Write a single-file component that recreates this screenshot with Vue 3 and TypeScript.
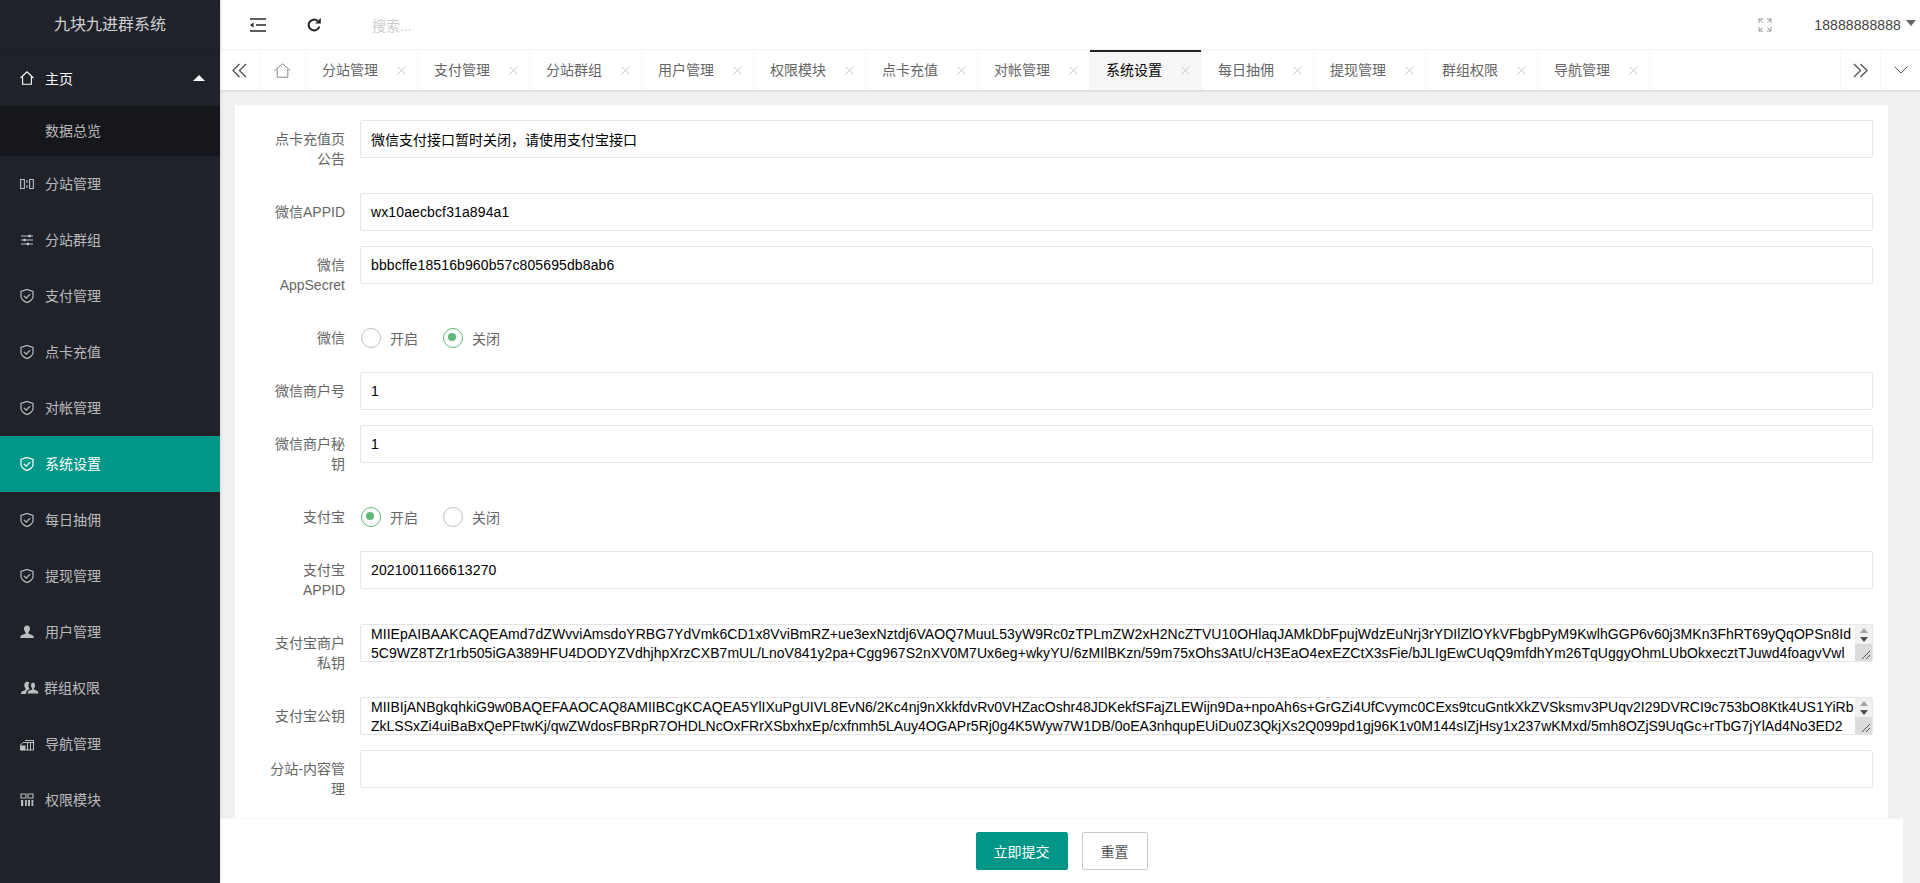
<script setup lang="ts">
interface NavItem { label: string; icon: string; active?: boolean }
const navItems: NavItem[] = [
  { label: '分站管理', icon: 'split' },
  { label: '分站群组', icon: 'sliders' },
  { label: '支付管理', icon: 'shield' },
  { label: '点卡充值', icon: 'shield' },
  { label: '对帐管理', icon: 'shield' },
  { label: '系统设置', icon: 'shield', active: true },
  { label: '每日抽佣', icon: 'shield' },
  { label: '提现管理', icon: 'shield' },
  { label: '用户管理', icon: 'user' },
  { label: '群组权限', icon: 'users' },
  { label: '导航管理', icon: 'chart' },
  { label: '权限模块', icon: 'grid' },
]
const tabs = ['分站管理', '支付管理', '分站群组', '用户管理', '权限模块', '点卡充值', '对帐管理', '系统设置', '每日抽佣', '提现管理', '群组权限', '导航管理']

type Row =
  | { kind: 'input'; label: string; value: string; tall?: boolean }
  | { kind: 'radio'; label: string; on: boolean }
  | { kind: 'area'; label: string; value: string; tall?: boolean }

const rows: Row[] = [
  { kind: 'input', label: '点卡充值页公告', value: '微信支付接口暂时关闭，请使用支付宝接口', tall: true },
  { kind: 'input', label: '微信APPID', value: 'wx10aecbcf31a894a1' },
  { kind: 'input', label: '微信AppSecret', value: 'bbbcffe18516b960b57c805695db8ab6', tall: true },
  { kind: 'radio', label: '微信', on: false },
  { kind: 'input', label: '微信商户号', value: '1' },
  { kind: 'input', label: '微信商户秘钥', value: '1', tall: true },
  { kind: 'radio', label: '支付宝', on: true },
  { kind: 'input', label: '支付宝APPID', value: '2021001166613270', tall: true },
  {
    kind: 'area',
    label: '支付宝商户私钥',
    tall: true,
    value:
      'MIIEpAIBAAKCAQEAmd7dZWvviAmsdoYRBG7YdVmk6CD1x8VviBmRZ+ue3exNztdj6VAOQ7MuuL53yW9Rc0zTPLmZW2xH2NcZTVU10OHlaqJAMkDbFpujWdzEuNrj3rYDIlZlOYkVFbgbPyM9KwlhGGP6v60j3MKn3FhRT69yQqOPSn8Id\n5C9WZ8TZr1rb505iGA389HFU4DODYZVdhjhpXrzCXB7mUL/LnoV841y2pa+Cgg967S2nXV0M7Ux6eg+wkyYU/6zMIlBKzn/59m75xOhs3AtU/cH3EaO4exEZCtX3sFie/bJLIgEwCUqQ9mfdhYm26TqUggyOhmLUbOkxecztTJuwd4foagvVwl',
  },
  {
    kind: 'area',
    label: '支付宝公钥',
    value:
      'MIIBIjANBgkqhkiG9w0BAQEFAAOCAQ8AMIIBCgKCAQEA5YlIXuPgUIVL8EvN6/2Kc4nj9nXkkfdvRv0VHZacOshr48JDKekfSFajZLEWijn9Da+npoAh6s+GrGZi4UfCvymc0CExs9tcuGntkXkZVSksmv3PUqv2I29DVRCI9c753bO8Ktk4US1YiRb\nZkLSSxZi4uiBaBxQePFtwKj/qwZWdosFBRpR7OHDLNcOxFRrXSbxhxEp/cxfnmh5LAuy4OGAPr5Rj0g4K5Wyw7W1DB/0oEA3nhqupEUiDu0Z3QkjXs2Q099pd1gj96K1v0M144sIZjHsy1x237wKMxd/5mh8OZjS9UqGc+rTbG7jYlAd4No3ED2',
  },
  { kind: 'input', label: '分站-内容管理', value: '', tall: true },
]
const isLatin = (s: string) => /^[\x00-\x7f]*$/.test(s)
</script>

<template>
  <div class="app">
    <aside class="side">
      <div class="logo">九块九进群系统</div>
      <div class="nav-item open">
        <svg class="ico" viewBox="0 0 14 14"><path d="M.6 7 7 .8 13.4 7M2.6 5.6v7.600h8.800V5.600" fill="none" stroke="currentColor" stroke-width="1.100" /></svg>
        <span>主页</span>
        <i class="nav-caret"></i>
      </div>
      <div class="sub">数据总览</div>
      <div v-for="n in navItems" :key="n.label" class="nav-item" :class="{ active: n.active }">
        <svg v-if="n.icon === 'split'" class="ico" viewBox="0 0 14 14">
          <path d="M.6 2.500h3.800v9H.6zM9.600 2.500h3.800v9H9.600z" fill="none" stroke="currentColor" stroke-width="1.100" />
          <path d="M6.200 3.500h1.500v2H6.200zM6.200 8.500h1.500v2H6.200z" fill="currentColor" />
        </svg>
        <svg v-else-if="n.icon === 'sliders'" class="ico" viewBox="0 0 14 14">
          <path d="M1 3h12M1 7h12M1 11h12" stroke="currentColor" stroke-width="1.200" />
          <path d="M8.500 1.800h2v2.400h-2zM3.500 5.800h2v2.400h-2zM6.800 9.800h2v2.400h-2z" fill="currentColor" />
        </svg>
        <svg v-else-if="n.icon === 'shield'" class="ico" viewBox="0 0 14 14">
          <path d="M7 .4 1 2.400v4.800c0 3 2.600 5 6 6.400 3.400-1.400 6-3.400 6-6.400V2.400z" fill="none" stroke="currentColor" stroke-width="1.200" />
          <path d="m3.900 6.900 2.300 2.200 3.900-3.900" fill="none" stroke="currentColor" stroke-width="1.200" />
        </svg>
        <svg v-else-if="n.icon === 'user'" class="ico" viewBox="0 0 14 14">
          <path d="M7 .4c1.900 0 3 1.400 3 3.200 0 1.500-.7 3-1.500 3.700v1.400c1.500.7 4.600 1.300 5.100 2.800.2.600.2 1.500.2 1.500H.2s0-.9.2-1.500c.5-1.500 3.600-2.100 5.100-2.800V7.300C4.700 6.600 4 5.100 4 3.600 4 1.800 5.100.4 7 .4z" fill="currentColor" />
        </svg>
        <svg v-else-if="n.icon === 'users'" class="ico wide" viewBox="0 0 18 14">
          <path d="M11.600 1.600c1.600 0 2.500 1.200 2.500 2.700 0 1.200-.5 2.500-1.200 3v1.300c1.300.6 3.800 1.100 4.300 2.400.2.500.2 1.500.2 1.500H6.700s0-1 .2-1.500c.4-1.300 3-1.800 4.300-2.400V7.300c-.7-.5-1.200-1.800-1.200-3 0-1.500.9-2.700 2.500-2.700z" fill="currentColor" />
          <path d="M6.200.8c1 0 1.800.5 2.200 1.300-.7.600-1 1.400-1 2.400 0 1.300.5 2.400 1.200 3.200v.6c-1.500.7-3.300 1.300-3.500 3.500v1.200H0s0-1 .2-1.500c.4-1.400 3-1.900 4.300-2.500V7.300C3.800 6.700 3.300 5.300 3.300 4 3.300 2.100 4.400.8 6.200.8z" fill="currentColor" />
        </svg>
        <svg v-else-if="n.icon === 'chart'" class="ico" viewBox="0 0 14 14">
          <path d="M.5 8 3 5.500h10.500V13H.5z" fill="none" stroke="currentColor" stroke-width="1" />
          <path d="M1 8.500h4.500V13H1z" fill="currentColor" />
          <path d="M7.500 5.500V13M10.500 5.500V13M5 3.500h8.500V6" fill="none" stroke="currentColor" stroke-width="1" />
        </svg>
        <svg v-else class="ico" viewBox="0 0 14 14">
          <path d="M1 1h5v4H1zM8 1h5v4H8z" fill="none" stroke="currentColor" stroke-width="1.100" />
          <path d="M1 7h2.200v6H1zM5 7h1.800v6H5zM8 7h2v6H8zM11.500 7h1.800v6h-1.800z" fill="currentColor" />
        </svg>
        <span>{{ n.label }}</span>
      </div>
    </aside>

    <div class="main">
      <header class="top">
        <svg class="top-ico fold" viewBox="0 0 16 14">
          <path d="M0 1h16M6 7h10M0 13h16" stroke="#2a2a2a" stroke-width="1.500" fill="none" />
          <path d="M0 7l3.500-2.500v5z" fill="#2a2a2a" />
        </svg>
        <svg class="top-ico refresh" viewBox="0 0 14 14">
          <path d="M12.300 8.400A5.400 5.400 0 1 1 10.600 2.900" stroke="#222" stroke-width="2" fill="none" />
          <path d="M8.200 5.400 13.800 5.400 13.800 0z" fill="#222" />
        </svg>
        <span class="search">搜索...</span>
        <svg class="top-ico full" viewBox="0 0 14 14">
          <path d="M1 5V1h4M1 1l3.500 3.500M13 5V1H9M13 1 9.500 4.500M1 9v4h4M1 13l3.500-3.500M13 9v4H9M13 13 9.500 9.500" stroke="#888" stroke-width=".9" fill="none" />
        </svg>
        <span class="user">18888888888</span>
        <i class="user-caret"></i>
      </header>

      <nav class="tabs">
        <div class="tab-btn first">
          <svg width="15" height="15" viewBox="0 0 15 15"><path d="M7.500 1 1 7.500 7.500 14M14 1 7.500 7.500 14 14" fill="none" stroke="#555" stroke-width="1.400" /></svg>
        </div>
        <div class="tab-btn home">
          <svg width="17" height="15" viewBox="0 0 17 15"><path d="M.6 7.600 8.500.8l7.900 6.800M3.200 5.800v8.400h10.600V5.800" fill="none" stroke="#888" stroke-width="1" /></svg>
        </div>
        <div v-for="t in tabs" :key="t" class="tab" :class="{ cur: t === '系统设置' }">
          <span class="tab-name">{{ t }}</span>
          <svg class="tab-x" width="9" height="9" viewBox="0 0 9 9"><path d="M.5.500l8 8M8.500.500l-8 8" stroke="#c8c8c8" stroke-width="1" /></svg>
        </div>
        <div class="tab-fill"></div>
        <div class="tab-btn edge">
          <svg width="15" height="15" viewBox="0 0 15 15"><path d="M1 1l6.500 6.500L1 14M7.500 1 14 7.500 7.500 14" fill="none" stroke="#555" stroke-width="1.400" /></svg>
        </div>
        <div class="tab-btn edge">
          <svg width="14" height="8" viewBox="0 0 14 8"><path d="M.5.500 7 7 13.500.500" fill="none" stroke="#555" stroke-width="1" /></svg>
        </div>
      </nav>

      <div class="content">
        <form class="card" @submit.prevent>
          <div v-for="r in rows" :key="r.label" class="row" :class="{ tall: 'tall' in r && r.tall }">
            <label class="lbl">{{ r.label }}</label>
            <input v-if="r.kind === 'input'" class="inp" :class="{ latin: isLatin(r.value) }" type="text" :value="r.value" />
            <div v-else-if="r.kind === 'radio'" class="radios">
              <span class="radio" :class="{ on: r.on }"><i></i>开启</span>
              <span class="radio" :class="{ on: !r.on }"><i></i>关闭</span>
            </div>
            <div v-else class="area-wrap">
              <textarea class="area" :class="{ spread: r.tall }" wrap="off" :value="r.value"></textarea>
              <div class="sbar">
                <div class="sbar-arrows">
                  <i class="up"></i>
                  <i class="down"></i>
                </div>
                <svg class="grip" width="17" height="17" viewBox="0 0 17 17"><path d="M7 15 15 7M11 15l4-4" stroke="#555" stroke-width="1" /></svg>
              </div>
            </div>
          </div>
        </form>
      </div>

      <footer class="foot">
        <button class="btn primary" type="button">立即提交</button>
        <button class="btn" type="button">重置</button>
      </footer>
    </div>
  </div>
</template>

<style>
html, body { margin: 0; height: 100%; overflow: hidden; }
</style>

<style scoped>
.app {
  display: flex;
  height: 883px;
  overflow: hidden;
  font-family: "Liberation Sans", "Noto Sans CJK SC", sans-serif;
  font-size: 14px;
  color: #666;
}
.side {
  position: relative;
  z-index: 2;
  width: 220px;
  flex: none;
  background: #20222a;
  color: rgba(255, 255, 255, .7);
  box-shadow: 1px 0 3px rgba(0, 0, 0, .1);
}
.logo {
  height: 50px;
  line-height: 50px;
  text-align: center;
  font-size: 16px;
  color: rgba(255, 255, 255, .8);
  box-shadow: 0 1px 2px rgba(0, 0, 0, .15);
}
.nav-item {
  position: relative;
  display: flex;
  align-items: center;
  height: 56px;
  padding-left: 20px;
}
.nav-item span { margin-left: 11px; margin-bottom: 2px; }
.nav-item.open { color: #fff; }
.nav-item.open span { margin-bottom: 0; }
.nav-item.active { background: #009688; color: #fff; }
.ico { width: 14px; height: 14px; flex: none; }
.ico.wide { width: 18px; margin-right: -4px; margin-left: 1px; }
.ico.wide + span { margin-left: 9px; }
.nav-caret {
  position: absolute;
  left: 193px;
  top: 25px;
  border: 6px solid transparent;
  border-top: 0;
  border-bottom-color: #fff;
}
.sub {
  height: 50px;
  line-height: 50px;
  padding-left: 45px;
  background: rgba(0, 0, 0, .3);
}
.main {
  flex: 1;
  min-width: 0;
  display: flex;
  flex-direction: column;
  background: #f0f0f0;
}
.top {
  height: 50px;
  flex: none;
  display: flex;
  align-items: center;
  background: #fff;
  box-sizing: border-box;
  border-bottom: 1px solid #f6f6f6;
}
.top-ico { flex: none; }
.fold { width: 16px; height: 14px; margin-left: 30px; }
.refresh { width: 14px; height: 14px; margin-left: 41px; }
.search { margin-left: 51px; color: #ccc; }
.full { width: 14px; height: 14px; margin-left: auto; margin-right: 2px; }
.user { margin-left: 40px; color: #444; letter-spacing: .1px; }
.user-caret {
  margin-left: 5px;
  margin-right: 4px;
  margin-top: -3px;
  border-left: 5.5px solid transparent;
  border-right: 5.5px solid transparent;
  border-top: 6px solid #666;
}
.tabs {
  height: 40px;
  flex: none;
  display: flex;
  background: #fff;
  box-sizing: border-box;
  box-shadow: 0 1px 2px rgba(0, 0, 0, .12);
  position: relative;
}
.tab-btn {
  display: flex;
  align-items: center;
  justify-content: center;
  box-sizing: border-box;
  flex: none;
}
.tab-btn.first { width: 40px; border-right: 1px solid #f6f6f6; }
.tab-btn.home { width: 46px; border-right: 1px solid #f6f6f6; }
.tab-btn.edge { width: 40px; border-left: 1px solid #f6f6f6; }
.tab {
  width: 112px;
  flex: none;
  box-sizing: border-box;
  display: flex;
  align-items: center;
  padding-left: 16px;
  border-right: 1px solid #f6f6f6;
  color: #666;
}
.tab-name { margin-bottom: 2px; }
.tab-x { margin-left: 19px; }
.tab.cur {
  background: #f6f6f6;
  color: #000;
  box-shadow: inset 0 2px 0 #20222a;
}
.tab-fill { flex: 1; }
.content {
  flex: 1;
  min-height: 0;
  overflow: hidden;
  padding: 15px 32px 0 15px;
}
.card {
  background: #fff;
  padding: 15px;
  min-height: 100%;
  box-sizing: border-box;
}
.row {
  display: flex;
  align-items: flex-start;
  min-height: 38px;
  margin-bottom: 15px;
}
.row.tall { min-height: 58px; }
.lbl {
  width: 110px;
  flex: none;
  box-sizing: border-box;
  padding: 9px 15px;
  line-height: 20px;
  text-align: right;
  color: #666;
}
.inp {
  flex: 1;
  min-width: 0;
  height: 38px;
  box-sizing: border-box;
  border: 1px solid #e6e6e6;
  border-radius: 2px;
  padding: 0 10px;
  font: inherit;
  color: #000;
  outline: none;
  background: #fff;
}
.inp.latin { letter-spacing: .12px; }
.radios {
  display: flex;
  height: 38px;
  align-items: center;
  margin-left: 1px;
}
.radio {
  display: flex;
  align-items: center;
  width: 82px;
  color: #666;
}
.radio i {
  width: 20px;
  height: 20px;
  box-sizing: border-box;
  border: 1.8px solid #c2c2c2;
  border-radius: 50%;
  margin-right: 9px;
  position: relative;
}
.radio.on i { border-color: #5fb878; }
.radio.on i::after {
  content: "";
  position: absolute;
  left: 4.2px;
  top: 4.2px;
  width: 8px;
  height: 8px;
  border-radius: 50%;
  background: #5fb878;
}
.area-wrap {
  position: relative;
  flex: 1;
  min-width: 0;
  height: 38px;
}
.area {
  display: block;
  width: 100%;
  height: 38px;
  box-sizing: border-box;
  border: 1px solid #e6e6e6;
  border-radius: 2px;
  padding: 0 25px 0 10px;
  font: inherit;
  line-height: 19px;
  color: #000;
  outline: none;
  resize: none;
  overflow: hidden;
  white-space: pre;
  background: #fff;
}
.area.spread { letter-spacing: .055px; }
.sbar {
  position: absolute;
  right: 1px;
  top: 1px;
  bottom: 1px;
  width: 17px;
  display: flex;
  flex-direction: column;
  background: #f1f1f1;
}
.sbar-arrows {
  flex: 1;
  display: flex;
  flex-direction: column;
  align-items: center;
  justify-content: center;
  gap: 4px;
}
.up { border: 4px solid transparent; border-top: 0; border-bottom: 5px solid #a3a3a3; }
.down { border: 4px solid transparent; border-bottom: 0; border-top: 5px solid #505050; }
.grip { display: block; background: #dcdcdc; flex: none; }
.foot {
  height: 65px;
  flex: none;
  margin-right: 17px;
  box-sizing: border-box;
  background: #fff;
  border-top: 1px solid #f6f6f6;
  display: flex;
  align-items: center;
  justify-content: center;
  gap: 14px;
}
.btn {
  height: 38px;
  box-sizing: border-box;
  padding: 0 18px;
  border: 1px solid #c9c9c9;
  border-radius: 2px;
  background: #fff;
  color: #555;
  font: inherit;
}
.btn.primary {
  padding: 0 17px;
  background: #009688;
  border-color: #009688;
  color: #fff;
}
</style>
